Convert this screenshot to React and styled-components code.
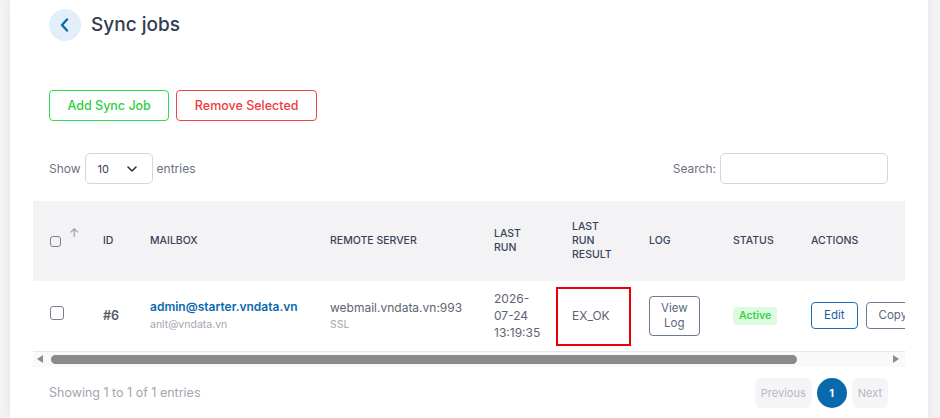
import React from "react";
import styled, { createGlobalStyle } from "styled-components";

const Global = createGlobalStyle`
  html, body { margin: 0; padding: 0; background: #f3f3f6; }
  body { font-family: Inter, "Noto Sans", sans-serif; width: 940px; height: 418px; overflow: hidden; }
  * { box-sizing: border-box; }
`;

const Page = styled.div`
  padding-left: 10px;
  width: 940px;
  height: 418px;
`;

const Card = styled.div`
  width: 918px;
  height: 418px;
  background: #fff;
  box-shadow: 0 0 10px rgba(30, 30, 60, 0.07);
  padding: 9px 40px 0 39px;
  display: flex;
  flex-direction: column;
`;

const TitleRow = styled.div`
  display: flex;
  align-items: center;
  gap: 10px;
  height: 32px;
`;

const BackButton = styled.button`
  width: 32px;
  height: 32px;
  border-radius: 50%;
  border: none;
  background: #e2effb;
  display: flex;
  align-items: center;
  justify-content: center;
  padding: 0;
  cursor: pointer;
`;

const Title = styled.h1`
  margin: 0;
  font-size: 19px;
  font-weight: 500;
  color: #333c4e;
  line-height: 28px;
`;

const ActionBar = styled.div`
  display: flex;
  gap: 7px;
  margin-top: 49px;
`;

const OutlineButton = styled.button`
  height: 31px;
  padding: 0 17.5px;
  border: 1px solid ${(p) => p.$color};
  color: ${(p) => p.$text || p.$color};
  background: #fff;
  border-radius: 4px;
  font-family: Inter, sans-serif;
  font-size: 12.5px;
  font-weight: 500;
  cursor: pointer;
`;

const ControlsRow = styled.div`
  display: flex;
  align-items: center;
  justify-content: space-between;
  margin-top: 32px;
  height: 31px;
`;

const Label = styled.label`
  display: flex;
  align-items: center;
  gap: 4px;
  font-size: 12px;
  color: #6b7280;
`;

const SelectBox = styled.div`
  width: 68px;
  height: 31px;
  border: 1px solid #d4d6dc;
  border-radius: 5px;
  display: flex;
  align-items: center;
  justify-content: space-between;
  padding: 0 15px 0 12px;
  font-size: 11px;
  color: #374151;
`;

const SearchInput = styled.input`
  width: 168px;
  height: 31px;
  border: 1px solid #d4d6dc;
  border-radius: 5px;
  outline: none;
`;

const TableWrap = styled.div`
  margin: 17px -17px 0 -16px;
  overflow: hidden;
`;

const Table = styled.table`
  border-collapse: collapse;
  table-layout: fixed;
  width: 984px;
`;

const HeadRow = styled.tr`
  background: #f3f3f6;
  height: 80px;
`;

const Th = styled.th`
  text-align: left;
  padding: 0 16px;
  font-size: 10.5px;
  font-weight: 500;
  line-height: 14px;
  color: #3a4256;
  text-transform: uppercase;
  vertical-align: middle;
  position: relative;
`;

const SortArrow = styled.span`
  position: absolute;
  left: 36px;
  top: 25px;
  font-size: 12px;
  color: #9ca3af;
`;

const BodyRow = styled.tr`
  height: 70px;
  border-bottom: 1px solid #e6e6ea;
`;

const Td = styled.td`
  padding: 0 16px;
  vertical-align: middle;
  font-size: 12px;
  color: #4b5563;
  position: relative;
`;

const MarkedTd = styled(Td)`
  &::after {
    content: "";
    position: absolute;
    left: 0;
    right: 2px;
    top: 6px;
    bottom: 5px;
    border: 2px solid #e8000b;
  }
`;

const Check = styled.span`
  display: inline-block;
  width: ${(p) => p.$size}px;
  height: ${(p) => p.$size}px;
  border: 1.5px solid #7b7f8c;
  border-radius: 3px;
  vertical-align: middle;
  margin-left: 1px;
`;

const IdText = styled.span`
  font-weight: 600;
  color: #555b67;
  font-size: 12.5px;
`;

const Primary = styled.div`
  font-weight: 600;
  color: #0c69ad;
  font-size: 12px;
  line-height: 18px;
`;

const Muted = styled.div`
  font-size: 10.5px;
  color: #a3a7b0;
  line-height: 17px;
`;

const Plain = styled.div`
  font-size: 12px;
  color: #5d6470;
  line-height: 17px;
`;

const SmallButton = styled.button`
  border: 1px solid ${(p) => p.$color};
  color: ${(p) => p.$text};
  background: #fff;
  border-radius: 4px;
  font-family: Inter, sans-serif;
  font-size: 11.5px;
  line-height: 15px;
  padding: ${(p) => p.$pad};
  cursor: pointer;
  white-space: nowrap;
`;

const ActionGroup = styled.div`
  display: flex;
  gap: 8px;
`;

const Badge = styled.span`
  display: inline-block;
  background: #ddfbe0;
  color: #3cd14a;
  font-weight: 600;
  font-size: 10.5px;
  padding: 2px 6px 3px;
  border-radius: 3px;
`;

const ScrollBar = styled.div`
  margin: 0 -17px 0 -16px;
  height: 15px;
  background: #f9f9fa;
  display: flex;
  align-items: center;
  padding: 0 6px 0 4px;
  gap: 8px;
`;

const Arrow = styled.span`
  width: 0;
  height: 0;
  border-top: 4.5px solid transparent;
  border-bottom: 4.5px solid transparent;
  ${(p) =>
    p.$dir === "left"
      ? "border-right: 6px solid #8c8c8c;"
      : "border-left: 6px solid #8c8c8c;"}
`;

const Track = styled.div`
  flex: 1;
  height: 9px;
  display: flex;
`;

const Thumb = styled.div`
  height: 9px;
  background: #8a8a8a;
  border-radius: 5px;
`;

const Footer = styled.div`
  display: flex;
  align-items: center;
  justify-content: space-between;
  margin-top: 11px;
`;

const Info = styled.div`
  font-size: 12.5px;
  color: #a2a6b0;
`;

const Pager = styled.div`
  display: flex;
  gap: 5px;
`;

const PageBtn = styled.button`
  height: 30px;
  min-width: 30px;
  padding: 0 ${(p) => (p.$active ? 0 : 6)}px;
  border: none;
  border-radius: ${(p) => (p.$active ? "50%" : "6px")};
  background: ${(p) => (p.$active ? "#0a68ad" : "#f5f5f7")};
  color: ${(p) => (p.$active ? "#fff" : "#b4b8c0")};
  font-family: Inter, sans-serif;
  font-size: 11px;
  font-weight: ${(p) => (p.$active ? 700 : 400)};
`;

const widths = [54, 47, 180, 164, 78, 77, 84, 78, 222];

export default function App() {
  return (
    <>
      <Global />
      <Page>
        <Card>
          <TitleRow>
            <BackButton aria-label="Back">
              <svg width="14" height="14" viewBox="0 0 14 14">
                <path d="M9 1.5 L4 7 L9 12.5" fill="none" stroke="#0b6ab0" strokeWidth="2.4" strokeLinecap="round" strokeLinejoin="round" />
              </svg>
            </BackButton>
            <Title>Sync jobs</Title>
          </TitleRow>

          <ActionBar>
            <OutlineButton $color="#2fdc4a" $text="#2ccf45">Add Sync Job</OutlineButton>
            <OutlineButton $color="#ef4444" $text="#ef3b3b">Remove Selected</OutlineButton>
          </ActionBar>

          <ControlsRow>
            <Label>
              Show
              <SelectBox>
                10
                <svg width="10" height="6" viewBox="0 0 10 6">
                  <path d="M1 1 L5 5 L9 1" fill="none" stroke="#333" strokeWidth="1.6" strokeLinecap="round" strokeLinejoin="round" />
                </svg>
              </SelectBox>
              entries
            </Label>
            <Label>
              Search:
              <SearchInput />
            </Label>
          </ControlsRow>

          <TableWrap>
            <Table>
              <colgroup>
                {widths.map((w, i) => (
                  <col key={i} style={{ width: w }} />
                ))}
              </colgroup>
              <thead>
                <HeadRow>
                  <Th>
                    <Check $size={11} />
                    <SortArrow>↑</SortArrow>
                  </Th>
                  <Th>ID</Th>
                  <Th>Mailbox</Th>
                  <Th>Remote server</Th>
                  <Th>Last<br />run</Th>
                  <Th>Last<br />run<br />result</Th>
                  <Th>Log</Th>
                  <Th>Status</Th>
                  <Th>Actions</Th>
                </HeadRow>
              </thead>
              <tbody>
                <BodyRow>
                  <Td>
                    <Check $size={14} style={{ marginTop: -7 }} />
                  </Td>
                  <Td><IdText>#6</IdText></Td>
                  <Td>
                    <Primary>admin@starter.vndata.vn</Primary>
                    <Muted>anlt@vndata.vn</Muted>
                  </Td>
                  <Td>
                    <Plain>webmail.vndata.vn:993</Plain>
                    <Muted>SSL</Muted>
                  </Td>
                  <Td>
                    <Plain>2026-<br />07-24<br />13:19:35</Plain>
                  </Td>
                  <MarkedTd>
                    <Plain>EX_OK</Plain>
                  </MarkedTd>
                  <Td>
                    <SmallButton $color="#6c7a93" $text="#5a6780" $pad="4px 11px">
                      View<br />Log
                    </SmallButton>
                  </Td>
                  <Td><Badge>Active</Badge></Td>
                  <Td>
                    <ActionGroup>
                      <SmallButton $color="#1a6fb5" $text="#1a5f9e" $pad="5px 12px">Edit</SmallButton>
                      <SmallButton $color="#6c7a93" $text="#5a6780" $pad="5px 12px">Copy</SmallButton>
                    </ActionGroup>
                  </Td>
                </BodyRow>
              </tbody>
            </Table>
          </TableWrap>

          <ScrollBar>
            <Arrow $dir="left" />
            <Track>
              <Thumb style={{ width: 746 }} />
            </Track>
            <Arrow $dir="right" />
          </ScrollBar>

          <Footer>
            <Info>Showing 1 to 1 of 1 entries</Info>
            <Pager>
              <PageBtn>Previous</PageBtn>
              <PageBtn $active>1</PageBtn>
              <PageBtn>Next</PageBtn>
            </Pager>
          </Footer>
        </Card>
      </Page>
    </>
  );
}
